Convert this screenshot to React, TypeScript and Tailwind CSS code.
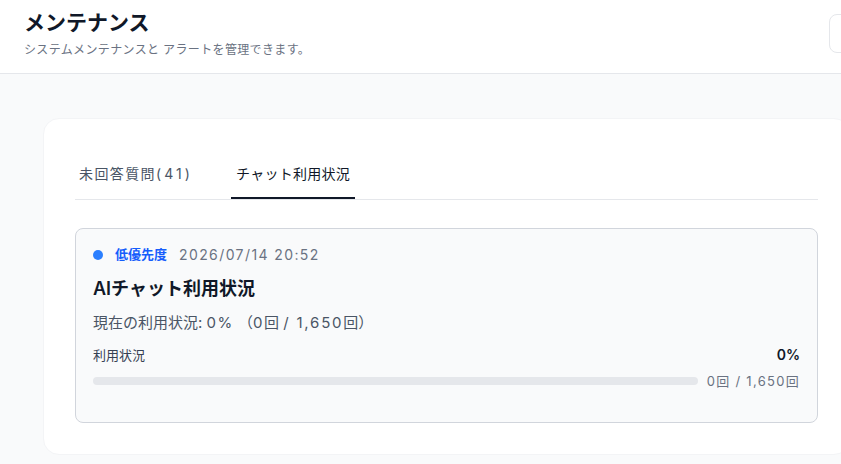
import React from "react";

export default function App() {
  const font = { fontFamily: "Inter, 'Noto Sans CJK JP', sans-serif" };
  return (
    <div className="w-[841px] h-[464px] overflow-hidden bg-[#f9fafb]" style={font}>
      <div className="w-[893px]">
        <header className="h-[74px] bg-white border-b border-gray-200 px-6 flex items-start justify-between">
          <div className="pt-[7px]">
            <h1 className="text-[21px] leading-8 font-bold text-gray-900">メンテナンス</h1>
            <p className="mt-[3px] text-xs leading-4 text-gray-500 tracking-[0.03em]">システムメンテナンスと アラートを管理できます。</p>
          </div>
          <div className="mt-[14px] w-[40px] h-[39px] rounded-lg border border-gray-200 bg-white" />
        </header>
        <main className="px-[43px] pt-[44px]">
          <div className="bg-white rounded-2xl border border-gray-100 px-[31px] pt-[45px] pb-[31px]">
            <div className="flex gap-[34px] border-b border-gray-200">
              <button className="px-1 pb-[13px] text-sm leading-5 text-gray-600 border-b-2 border-transparent tracking-[0.1em]">
                未回答質問<span className="tracking-[0.22em]">(41)</span>
              </button>
              <button className="px-[5px] pb-[13px] text-sm leading-5 text-gray-900 border-b-2 border-gray-900 tracking-[0.02em]">チャット利用状況</button>
            </div>
            <div className="mt-[28px] h-[195px] rounded-lg border border-gray-300 bg-gray-50 px-[17px] pt-[16px]">
              <div className="flex items-center h-5">
                <span className="w-[10px] h-[10px] rounded-full bg-blue-500" />
                <span className="ml-3 text-[13px] font-semibold text-blue-600">低優先度</span>
                <span className="ml-3 text-sm text-gray-500 tracking-[0.1em]">2026/07/14 20:52</span>
              </div>
              <h2 className="mt-[12px] text-lg leading-6 font-semibold text-gray-900">AIチャット利用状況</h2>
              <p className="mt-[12px] text-[15px] leading-5 text-gray-600">
                現在の利用状況: <span className="tracking-[0.1em]">0%</span> （<span className="tracking-[0.1em]">0</span>回 <span className="tracking-[0.12em]">/ 1,650</span>回）
              </p>
              <div className="mt-[12px] flex items-center justify-between">
                <span className="text-[13px] leading-4 text-gray-700">利用状況</span>
                <span className="text-sm leading-5 font-semibold text-gray-900">0%</span>
              </div>
              <div className="mt-[6px] flex items-center">
                <div className="flex-1 h-2 rounded-full bg-gray-200" />
                <span className="ml-[9px] text-[13px] leading-5 text-gray-500 tracking-[0.1em]">0回 / 1,650回</span>
              </div>
            </div>
          </div>
        </main>
      </div>
    </div>
  );
}
